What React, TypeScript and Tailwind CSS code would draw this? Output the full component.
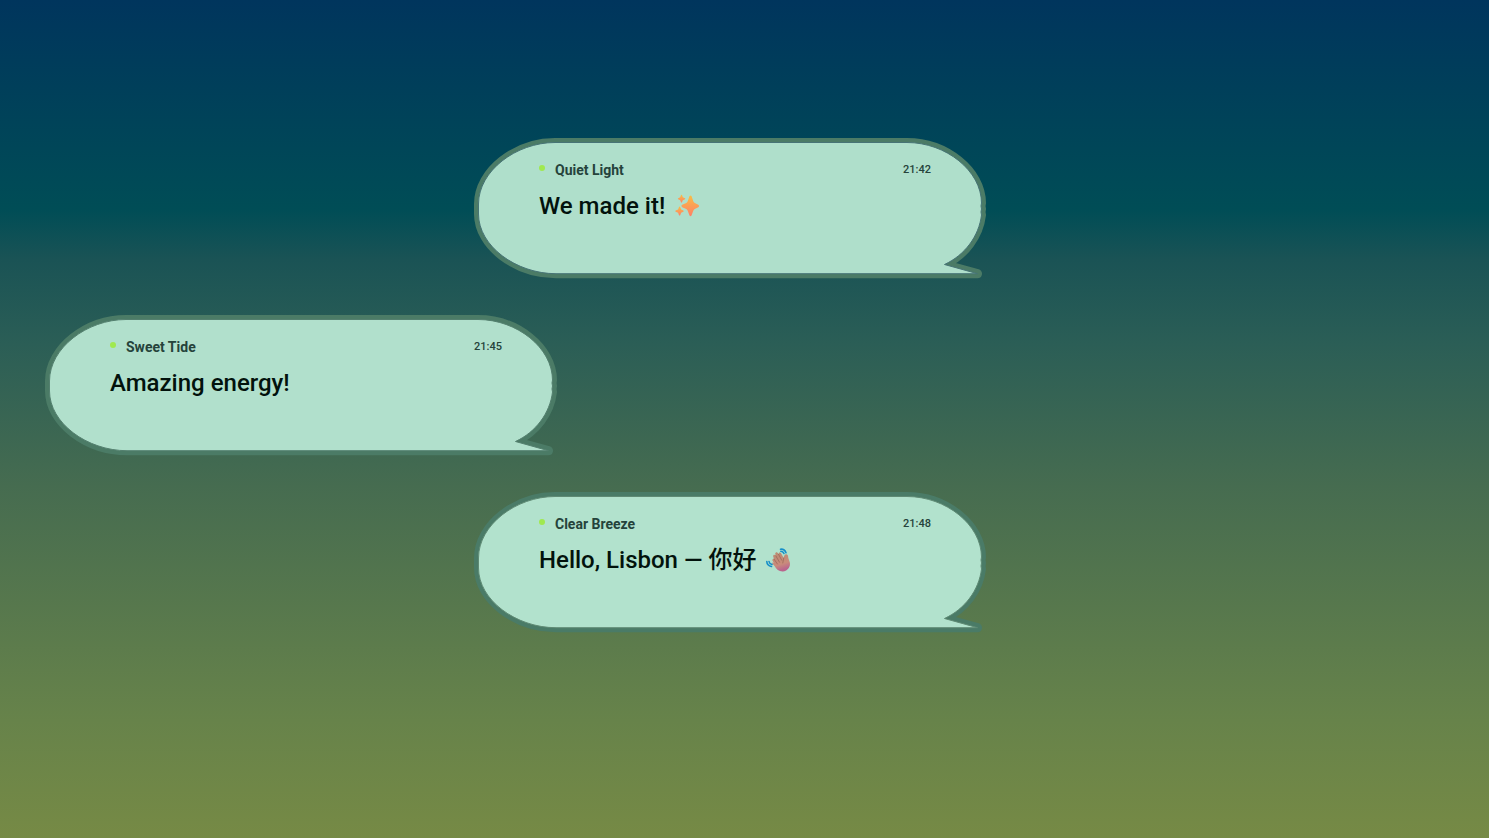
import React from "react";

type Message = {
  author: string;
  time: string;
  text: string;
  emoji?: "sparkles" | "wave";
  side: "left" | "right";
  fill: string;
  rim: string;
  edge: string;
};

const messages: Message[] = [
  { author: "Quiet Light", time: "21:42", text: "We made it!", emoji: "sparkles", side: "right", fill: "#afdfcb", rim: "#4b7b66", edge: "#477476" },
  { author: "Sweet Tide", time: "21:45", text: "Amazing energy!", side: "left", fill: "#b1e0cc", rim: "#4b7b66", edge: "#54806f" },
  { author: "Clear Breeze", time: "21:48", text: "Hello, Lisbon — 你好", emoji: "wave", side: "right", fill: "#b2e2cd", rim: "#4a7b67", edge: "#5f8a74" },
];

const outline =
  "M81 4.500H433C472 4.500 507.500 33 507.500 65L507 68L507.500 71L507 74L507.500 77C505 98 491 117 470.500 126.500L503.500 135.700H82C42 135.700 4.500 108 4.500 76V66C4.500 33 42 4.500 81 4.500Z";

function Sparkles() {
  return (
    <svg viewBox="0 0 24 24" className="size-6" role="img" aria-label="sparkles">
      <defs>
        <linearGradient id="spark" x1="0" y1="0" x2="0" y2="1">
          <stop offset="0" stopColor="#f8bd45" />
          <stop offset="1" stopColor="#ff8067" />
        </linearGradient>
      </defs>
      <g fill="url(#spark)">
        <path d="M14.500 2Q15.500 1 16.500 2L18.300 7.300Q18.800 8.800 20.300 9.300L23.300 10.800Q24.800 12 23.300 13.200L20.300 14.700Q18.800 15.200 18.300 16.700L16.500 21.500Q15.500 23 14.500 21.500L12.700 16.700Q12.200 15.200 10.700 14.700L7.200 13.200Q5.700 12 7.200 10.800L10.700 9.300Q12.200 8.800 12.700 7.300Z" />
        <path d="M6 1Q6.500 .5 7 1L7.800 3.200L10 4.300Q10.700 4.800 10 5.300L7.800 6.300L7 8.300Q6.500 9 6 8.300L5.200 6.300L3.200 5.300Q2.500 4.800 3.200 4.300L5.200 3.200Z" />
        <path d="M4 13Q4.600 12.200 5.200 13L6.100 15.600L8.400 16.600Q9 17.200 8.400 17.800L6.100 18.800L5.200 21.200Q4.600 22 4 21.200L3.100 18.800L.6 17.800Q0 17.200 .6 16.600L3.100 15.600Z" />
      </g>
    </svg>
  );
}

function Wave() {
  return (
    <svg viewBox="0 0 24 24" className="size-6" role="img" aria-label="waving hand">
      <defs>
        <linearGradient id="hand" x1="0" y1="0" x2=".3" y2="1">
          <stop offset="0" stopColor="#b98a70" />
          <stop offset=".7" stopColor="#ca8c7b" />
          <stop offset="1" stopColor="#b9658d" />
        </linearGradient>
      </defs>
      <path
        d="M8 15.500L6.600 12.800C5.800 11.500 7 10.600 8 11L7.200 8.600C6.700 7 8.400 6 9.400 7.200L9.800 7.800L9.300 6C9 4.400 10.900 3.600 11.800 5L12.500 6.300C12.500 4.300 14.400 3.900 15.200 5.400L17.700 10C18 7.500 18.900 6 20.400 6.200C22 6.400 22.200 8 22.300 10L23.700 14C25 18.500 21.500 23 17 23.400C13 23.600 10.500 21.500 8.500 18L6.200 15.500C5.700 14.300 6.900 13.800 8 15.500Z"
        fill="url(#hand)"
      />
      <path d="M8 11L11.400 16M9.800 7.800L13.500 14.200M12.500 6.300L15.700 12.200M17.700 10L16.800 15" fill="none" stroke="#966356" strokeWidth=".7" strokeLinecap="round" />
      <path d="M14.500 1.200Q18.500 .8 20 4.700M14.800 3.200Q17 3.200 18 5.500M.8 13.500Q1 17.500 5.500 18.500M3 13.500Q3.300 15.600 6 16.500" fill="none" stroke="#168fc9" strokeWidth="1.600" strokeLinecap="round" />
    </svg>
  );
}

function Bubble({ message }: { message: Message }) {
  return (
    <li
      className={
        message.side === "right"
          ? "relative w-full max-w-[512px] self-end"
          : "relative w-full max-w-[512px] self-start"
      }
    >
      <svg viewBox="0 0 512 140" preserveAspectRatio="none" className="absolute inset-0 size-full overflow-visible" aria-hidden="true">
        <path d={outline} fill={message.rim} stroke={message.rim} strokeWidth="9" strokeLinejoin="round" />
        <path d={outline} fill={message.fill} stroke={message.edge} strokeWidth="1" />
      </svg>
      <article className="relative min-h-[140px] pt-5 pr-[55px] pb-5 pl-[65px]">
        <header className="flex items-center justify-between text-[#25433b]">
          <div className="flex items-center gap-2.5">
            <span className="mb-1 size-1.5 rounded-full bg-[#a0e950]" />
            <h2 className="text-[14px] leading-6 font-bold">{message.author}</h2>
          </div>
          <time className="text-[11px] leading-5 font-medium">{message.time}</time>
        </header>
        <p className="mt-2 flex items-center gap-2.5 text-[24px] leading-8 font-medium text-[#02120c]">
          {message.text}
          {message.emoji === "sparkles" && <Sparkles />}
          {message.emoji === "wave" && <Wave />}
        </p>
      </article>
    </li>
  );
}

export default function App() {
  return (
    <main className="min-h-screen bg-[linear-gradient(180deg,#00355d_0%,#004d56_25%,#1a5355_31%,#2b5e56_41%,#466c50_58%,#67834a_86%,#768a45_100%)] pt-[138px] pb-10 font-['Roboto','Noto_Sans_CJK_SC',sans-serif]">
      <ul className="flex w-full max-w-[986px] flex-col gap-[37px] pl-[45px]">
        {messages.map((message) => (
          <Bubble key={message.time} message={message} />
        ))}
      </ul>
    </main>
  );
}
